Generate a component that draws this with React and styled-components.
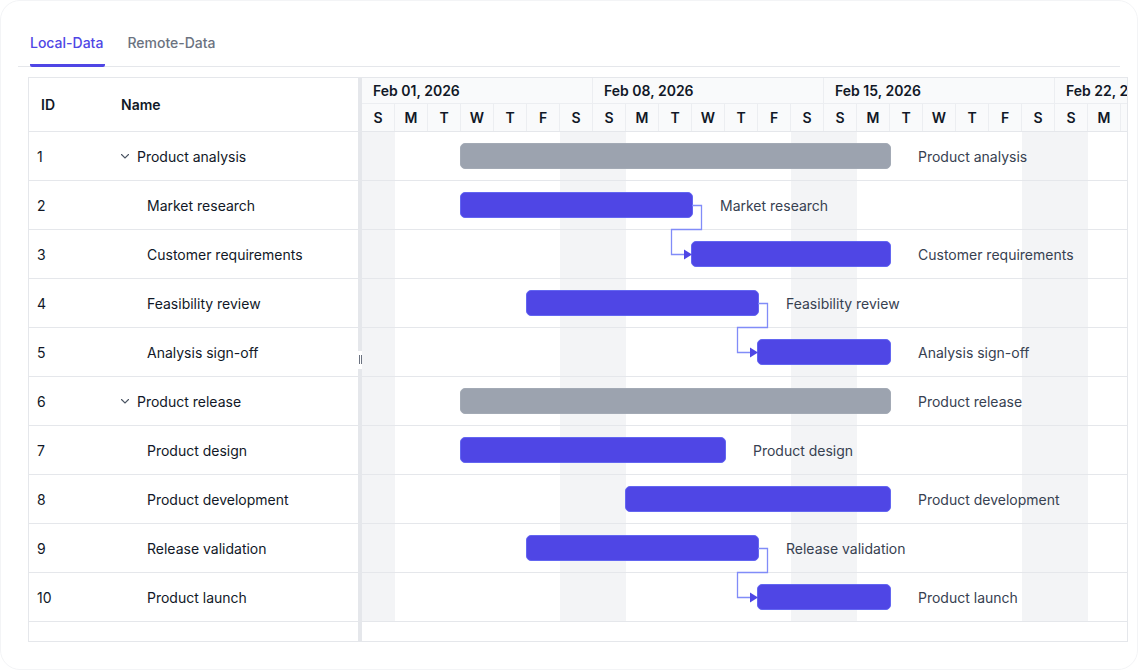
import React, { useState } from 'react';
import styled, { createGlobalStyle } from 'styled-components';

const DAY = 33;
const ROW = 49;
const DAYS = 24;

const tasks = [
    { id: 1, name: 'Product analysis', parent: true, start: 3, end: 16 },
    { id: 2, name: 'Market research', start: 3, end: 10 },
    { id: 3, name: 'Customer requirements', start: 10, end: 16 },
    { id: 4, name: 'Feasibility review', start: 5, end: 12 },
    { id: 5, name: 'Analysis sign-off', start: 12, end: 16 },
    { id: 6, name: 'Product release', parent: true, start: 3, end: 16 },
    { id: 7, name: 'Product design', start: 3, end: 11 },
    { id: 8, name: 'Product development', start: 8, end: 16 },
    { id: 9, name: 'Release validation', start: 5, end: 12 },
    { id: 10, name: 'Product launch', start: 12, end: 16 },
];

// predecessor -> successor (row index)
const links = [[1, 2], [3, 4], [8, 9]];

const weeks = ['Feb 01, 2026', 'Feb 08, 2026', 'Feb 15, 2026', 'Feb 22, 2026'];
const letters = ['S', 'M', 'T', 'W', 'T', 'F', 'S'];

const GlobalStyle = createGlobalStyle`
    html, body {
        margin: 0;
        padding: 0;
        background: #ffffff;
    }
    body {
        font-family: Inter, "Noto Sans", "Liberation Sans", sans-serif;
        color: #111827;
        -webkit-font-smoothing: antialiased;
    }
    * { box-sizing: border-box; }
`;

const Card = styled.div`
    height: 100vh;
    border: 1px solid #f3f4f6;
    border-radius: 20px;
    background: #fff;
    overflow: hidden;
`;

const TabBar = styled.div`
    display: flex;
    gap: 22px;
    margin: 0 17px 0 17px;
    padding: 22px 0 0 12px;
    border-bottom: 1px solid #e5e7eb;
`;

const Tab = styled.button`
    border: 0;
    background: none;
    font: inherit;
    font-size: 14px;
    line-height: 20px;
    font-weight: 500;
    padding: 10px 2px 11px 0;
    margin-bottom: -1px;
    cursor: pointer;
    color: ${p => (p.$active ? '#4f46e5' : '#6b7280')};
    border-bottom: 3px solid ${p => (p.$active ? '#4f46e5' : 'transparent')};
    border-radius: 2px;
`;

const Gantt = styled.div`
    display: flex;
    width: 1100px;
    height: 565px;
    margin: 10px 0 0 27px;
    border: 1px solid #e5e7eb;
    position: relative;
`;

const Grid = styled.div`
    width: 329px;
    flex-shrink: 0;
`;

const GridHeader = styled.div`
    display: flex;
    align-items: center;
    height: 54px;
    border-bottom: 1px solid #e5e7eb;
    font-size: 14px;
    font-weight: 600;
`;

const HeadCell = styled.div`
    width: ${p => p.$w || 'auto'};
    flex: ${p => (p.$w ? 'none' : 1)};
    padding-left: 12px;
`;

const GridRow = styled.div`
    display: flex;
    align-items: center;
    height: ${ROW}px;
    border-bottom: 1px solid #e5e7eb;
    font-size: 14px;
    color: #111827;
`;

const IdCell = styled.div`
    width: 80px;
    padding-left: 8px;
`;

const NameCell = styled.div`
    flex: 1;
    display: flex;
    align-items: center;
    gap: 7px;
    padding-left: ${p => (p.$child ? 38 : 11)}px;
    white-space: nowrap;
`;

const Chevron = styled.svg`
    width: 10px;
    height: 10px;
    flex-shrink: 0;
`;

const Splitter = styled.div`
    width: 4px;
    flex-shrink: 0;
    background: #e5e7eb;
    position: relative;
`;

const Handle = styled.div`
    position: absolute;
    top: 50%;
    left: -1px;
    width: 6px;
    height: 18px;
    margin-top: -9px;
    background: #fff;
    display: flex;
    align-items: center;
    justify-content: center;
    gap: 1px;

    &::before, &::after {
        content: '';
        width: 1px;
        height: 9px;
        background: #6b7280;
    }
`;

const Chart = styled.div`
    flex: 1;
    overflow: hidden;
    position: relative;
`;

const TimeHeader = styled.div`
    width: ${DAYS * DAY}px;
    background: #f9fafb;
    border-bottom: 1px solid #e5e7eb;
`;

const WeekRow = styled.div`
    display: flex;
    height: 26px;
    border-bottom: 1px solid #eceef1;
`;

const WeekCell = styled.div`
    width: ${7 * DAY}px;
    flex-shrink: 0;
    padding-left: 11px;
    display: flex;
    align-items: center;
    font-size: 14px;
    font-weight: 600;
    border-right: 1px solid #eceef1;
    white-space: nowrap;
`;

const DayRow = styled.div`
    display: flex;
    height: 27px;
`;

const DayCell = styled.div`
    width: ${DAY}px;
    flex-shrink: 0;
    display: flex;
    align-items: center;
    justify-content: center;
    font-size: 14px;
    font-weight: 600;
    border-right: 1px solid #eceef1;
`;

const Body = styled.div`
    position: relative;
    width: ${DAYS * DAY}px;
    background: repeating-linear-gradient(
        90deg,
        #f3f4f6 0 ${DAY}px,
        transparent ${DAY}px ${6 * DAY}px,
        #f3f4f6 ${6 * DAY}px ${7 * DAY}px
    );
`;

const ChartRow = styled.div`
    position: relative;
    height: ${ROW}px;
    border-bottom: 1px solid #e5e7eb;
`;

const Bar = styled.div`
    position: absolute;
    top: 11px;
    height: 26px;
    border-radius: 5px;
    background: ${p => (p.$summary ? '#9ca3af' : '#4f46e5')};
    border: 1px solid ${p => (p.$summary ? '#a3aab5' : '#6366f1')};
`;

const BarLabel = styled.span`
    position: absolute;
    top: 0;
    height: 48px;
    display: flex;
    align-items: center;
    font-size: 14px;
    color: #374151;
    white-space: nowrap;
`;

const Links = styled.svg`
    position: absolute;
    left: 0;
    top: 0;
    pointer-events: none;
`;

function linkPath(a, b) {
    const xe = a.end * DAY;
    const xs = b.start * DAY;
    const y1 = tasks.indexOf(a) * ROW + 24;
    const yTop = tasks.indexOf(b) * ROW - 0.5;
    const y2 = tasks.indexOf(b) * ROW + 24;
    return {
        d: `M${xe} ${y1 + 0.5} H${xe + 9.5} V${yTop} H${xs - 20.5} V${y2 + 0.5} H${xs - 6}`,
        arrow: `${xs - 8},${y2 - 4.5} ${xs},${y2 + 0.5} ${xs - 8},${y2 + 5.5}`,
    };
}

const Down = () => (
    <Chevron viewBox="0 0 10 10">
        <path d="M1.5 3.5 L5 7 L8.5 3.5" fill="none" stroke="#4b5563" strokeWidth="1.1" strokeLinecap="round" />
    </Chevron>
);

export default function App() {
    const [tab, setTab] = useState('local');
    const days = Array.from({ length: DAYS }, (_, i) => letters[i % 7]);

    return (
        <>
            <GlobalStyle />
            <Card>
                <TabBar>
                    <Tab $active={tab === 'local'} onClick={() => setTab('local')}>Local-Data</Tab>
                    <Tab $active={tab === 'remote'} onClick={() => setTab('remote')}>Remote-Data</Tab>
                </TabBar>

                <Gantt>
                    <Grid>
                        <GridHeader>
                            <HeadCell $w="80px">ID</HeadCell>
                            <HeadCell>Name</HeadCell>
                        </GridHeader>
                        {tasks.map(t => (
                            <GridRow key={t.id}>
                                <IdCell>{t.id}</IdCell>
                                <NameCell $child={!t.parent}>
                                    {t.parent && <Down />}
                                    {t.name}
                                </NameCell>
                            </GridRow>
                        ))}
                    </Grid>

                    <Splitter>
                        <Handle />
                    </Splitter>

                    <Chart>
                        <TimeHeader>
                            <WeekRow>
                                {weeks.map(w => <WeekCell key={w}>{w}</WeekCell>)}
                            </WeekRow>
                            <DayRow>
                                {days.map((d, i) => <DayCell key={i}>{d}</DayCell>)}
                            </DayRow>
                        </TimeHeader>
                        <Body>
                            {tasks.map(t => (
                                <ChartRow key={t.id}>
                                    <Bar
                                        $summary={t.parent}
                                        style={{ left: t.start * DAY - 1, width: (t.end - t.start) * DAY + 2 }}
                                    />
                                    <BarLabel style={{ left: t.end * DAY + 28 }}>{t.name}</BarLabel>
                                </ChartRow>
                            ))}
                            <Links width={DAYS * DAY} height={tasks.length * ROW}>
                                {links.map(([a, b]) => {
                                    const p = linkPath(tasks[a], tasks[b]);
                                    return (
                                        <g key={a}>
                                            <path d={p.d} fill="none" stroke="#818cf8" strokeWidth="1.3" />
                                            <polygon points={p.arrow} fill="#4f46e5" />
                                        </g>
                                    );
                                })}
                            </Links>
                        </Body>
                    </Chart>
                </Gantt>
            </Card>
        </>
    );
}
